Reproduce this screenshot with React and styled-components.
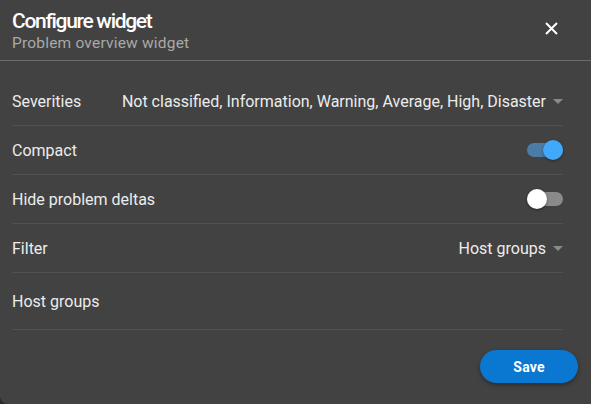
import React, { useState } from "react";
import styled, { createGlobalStyle } from "styled-components";

const GlobalStyle = createGlobalStyle`
  html, body {
    margin: 0;
    padding: 0;
    background: #2a2a2a;
    font-family: Roboto, "Noto Sans", sans-serif;
  }
`;

const Dialog = styled.div`
  width: 591px;
  height: 404px;
  background: #424242;
  border-radius: 0 0 0 8px;
  color: #ececec;
  display: flex;
  flex-direction: column;
  box-sizing: border-box;
  overflow: hidden;
`;

const Header = styled.div`
  display: flex;
  align-items: center;
  justify-content: space-between;
  padding: 2px 28px 0 12px;
  height: 61px;
  box-sizing: border-box;
  border-bottom: 1px solid #6b6b6b;
`;

const Titles = styled.div`
  display: flex;
  flex-direction: column;
`;

const Title = styled.h2`
  margin: 0;
  font-size: 21px;
  font-weight: 500;
  letter-spacing: -1.3px;
  line-height: 24px;
  color: #ffffff;
`;

const Subtitle = styled.div`
  font-size: 15.5px;
  line-height: 20px;
  letter-spacing: 0.2px;
  color: #a9a9a9;
`;

const CloseButton = styled.button`
  background: none;
  border: none;
  padding: 0;
  width: 24px;
  height: 24px;
  display: flex;
  align-items: center;
  justify-content: center;
  color: #fff;
  cursor: pointer;
  margin-top: -6px;
`;

const Body = styled.div`
  padding: 16px 28px 0 12px;
  display: flex;
  flex-direction: column;
`;

const Row = styled.div`
  display: flex;
  align-items: center;
  justify-content: space-between;
  height: ${(p) => p.$h || 48}px;
  border-bottom: 1px solid #515151;
  font-size: 16px;
`;

const Label = styled.span`
  color: #ececec;
`;

const Select = styled.div`
  display: flex;
  align-items: center;
  gap: 6px;
  color: #ececec;
`;

const Caret = styled.span`
  width: 0;
  height: 0;
  border-left: 5px solid transparent;
  border-right: 5px solid transparent;
  border-top: 5px solid #8a8a8a;
  margin-left: 1px;
`;

const Track = styled.div`
  position: relative;
  width: 36px;
  height: 14px;
  border-radius: 7px;
  background: ${(p) => (p.$on ? "#4b7ca8" : "#8a8a8a")};
  cursor: pointer;
`;

const Thumb = styled.span`
  position: absolute;
  top: -3px;
  left: ${(p) => (p.$on ? "16px" : "0")};
  width: 20px;
  height: 20px;
  border-radius: 50%;
  background: ${(p) => (p.$on ? "#42a8fa" : "#ffffff")};
  box-shadow: 0 1px 3px rgba(0, 0, 0, 0.4);
`;

const Footer = styled.div`
  display: flex;
  justify-content: flex-end;
  padding: 20px 13px 0 12px;
`;

const SaveButton = styled.button`
  width: 98px;
  height: 33px;
  border: none;
  border-radius: 17px;
  background: #0a77d0;
  color: #fff;
  font-family: Roboto, sans-serif;
  font-size: 14px;
  font-weight: 700;
  letter-spacing: 0.2px;
  box-shadow: 0 2px 4px rgba(0, 0, 0, 0.35);
  cursor: pointer;
`;

function Toggle({ on, onChange }) {
  return (
    <Track $on={on} onClick={() => onChange(!on)}>
      <Thumb $on={on} />
    </Track>
  );
}

export default function App() {
  const [compact, setCompact] = useState(true);
  const [hideDeltas, setHideDeltas] = useState(false);

  return (
    <>
      <GlobalStyle />
      <Dialog>
        <Header>
          <Titles>
            <Title>Configure widget</Title>
            <Subtitle>Problem overview widget</Subtitle>
          </Titles>
          <CloseButton aria-label="close">
            <svg width="13" height="13" viewBox="0 0 13 13">
              <path d="M1 1L12 12M12 1L1 12" stroke="#fff" strokeWidth="2" />
            </svg>
          </CloseButton>
        </Header>
        <Body>
          <Row>
            <Label>Severities</Label>
            <Select>
              Not classified, Information, Warning, Average, High, Disaster
              <Caret />
            </Select>
          </Row>
          <Row>
            <Label>Compact</Label>
            <Toggle on={compact} onChange={setCompact} />
          </Row>
          <Row>
            <Label>Hide problem deltas</Label>
            <Toggle on={hideDeltas} onChange={setHideDeltas} />
          </Row>
          <Row>
            <Label>Filter</Label>
            <Select>
              Host groups
              <Caret />
            </Select>
          </Row>
          <Row $h={56}>
            <Label>Host groups</Label>
          </Row>
        </Body>
        <Footer>
          <SaveButton>Save</SaveButton>
        </Footer>
      </Dialog>
    </>
  );
}
